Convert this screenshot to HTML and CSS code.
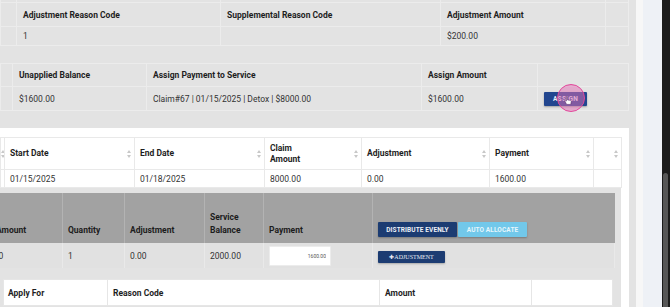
FILE: index.html
```html
<!DOCTYPE html>
<html lang="en">

  <head>
    <meta charset="UTF-8">
    <meta name="viewport" content="width=device-width, initial-scale=1.0">
    <title>Payment Posting</title>
    <link rel="stylesheet" href="styles.css">
  </head>

  <body>
    <div class="main">

      <table class="grid adj-table">
        <colgroup>
          <col class="w16"><col class="w204"><col class="w220"><col class="w165"><col>
        </colgroup>
        <tr class="cut-row"><td></td><td></td><td></td><td></td><td></td></tr>
        <tr class="head-row">
          <th></th>
          <th>Adjustment Reason Code</th>
          <th>Supplemental Reason Code</th>
          <th>Adjustment Amount</th>
          <th></th>
        </tr>
        <tr class="data-row">
          <td></td>
          <td>1</td>
          <td></td>
          <td>$200.00</td>
          <td></td>
        </tr>
      </table>

      <table class="grid assign-table">
        <colgroup>
          <col class="w12"><col class="w134"><col class="w275"><col class="w116"><col>
        </colgroup>
        <tr class="head-row">
          <th></th>
          <th>Unapplied Balance</th>
          <th>Assign Payment to Service</th>
          <th>Assign Amount</th>
          <th></th>
        </tr>
        <tr class="data-row">
          <td></td>
          <td>$1600.00</td>
          <td>Claim#67 | 01/15/2025 | Detox | $8000.00</td>
          <td>$1600.00</td>
          <td>
            <div class="assign-wrap">
              <button class="btn-assign">ASSIGN</button>
              <span class="click-ring">
                <svg class="hand" width="8" height="9" viewBox="0 0 8 9">
                  <path d="M2.4 0.6 L2.4 5 L1.4 4.2 Q0.6 3.8 0.7 4.7 L2.6 8.4 L6.8 8.4 L7.3 5.2 Q7.3 4.4 6.4 4.3 L3.5 3.9 L3.5 0.6 Q3 0 2.4 0.6 Z" fill="#fff" stroke="#5a2a6a" stroke-width="0.6"/>
                </svg>
              </span>
            </div>
          </td>
        </tr>
      </table>

      <div class="panel">
        <table class="grid claim-table">
          <colgroup>
            <col class="w4"><col class="w130"><col class="w130"><col class="w97"><col class="w128"><col class="w104"><col>
          </colgroup>
          <tr class="head-row">
            <th><div class="th-inner"><span></span><span class="sort"></span></div></th>
            <th><div class="th-inner"><span>Start Date</span><span class="sort"></span></div></th>
            <th><div class="th-inner"><span>End Date</span><span class="sort"></span></div></th>
            <th><div class="th-inner"><span>Claim<br>Amount</span><span class="sort"></span></div></th>
            <th><div class="th-inner"><span>Adjustment</span><span class="sort"></span></div></th>
            <th><div class="th-inner"><span>Payment</span><span class="sort"></span></div></th>
            <th><div class="th-inner"><span></span><span class="sort"></span></div></th>
          </tr>
          <tr class="data-row">
            <td></td>
            <td>01/15/2025</td>
            <td>01/18/2025</td>
            <td>8000.00</td>
            <td>0.00</td>
            <td>1600.00</td>
            <td></td>
          </tr>
        </table>

        <div class="nested">
          <table class="service-table">
            <colgroup>
              <col class="w68"><col class="w62"><col class="w80"><col class="w59"><col class="w109"><col>
            </colgroup>
            <tr class="head-row">
              <th class="first">Amount</th>
              <th>Quantity</th>
              <th>Adjustment</th>
              <th>Service<br>Balance</th>
              <th>Payment</th>
              <th>
                <div class="btn-group">
                  <button class="btn-dark">DISTRIBUTE EVENLY</button>
                  <button class="btn-light">AUTO ALLOCATE</button>
                </div>
              </th>
            </tr>
            <tr class="data-row">
              <td class="first">0</td>
              <td>1</td>
              <td>0.00</td>
              <td>2000.00</td>
              <td><input class="pay-input" type="text" value="1600.00"></td>
              <td><button class="btn-adjust">&#10010;ADJUSTMENT</button></td>
            </tr>
          </table>

          <table class="grid apply-table">
            <colgroup>
              <col class="w104"><col class="w272"><col class="w152"><col>
            </colgroup>
            <tr class="head-row">
              <th>Apply For</th>
              <th>Reason Code</th>
              <th>Amount</th>
              <th></th>
            </tr>
          </table>
        </div>
      </div>

    </div>
    <div class="edge"></div>
    <div class="side"></div>
    <div class="scrollbar"><div class="thumb"></div></div>
  </body>

</html>
```

FILE: styles.css
```css
body {
  margin: 0;
  height: 307px;
  overflow: hidden;
  display: flex;
  font-family: Roboto, "Liberation Sans", sans-serif;
  font-size: 8.5px;
  color: #333;
  background-color: #e3e3e3;
}

.main {
  width: 636px;
  flex-shrink: 0;
  background-color: #e3e3e3;
  overflow: hidden;
}

.edge {
  width: 7px;
  background-color: #f7f7f7;
}

.side {
  width: 19px;
  background-color: #eef1f6;
}

.scrollbar {
  width: 8px;
  background-color: #1c1c1c;
  padding-top: 173px;
  box-sizing: border-box;
}

.thumb {
  width: 5px;
  height: 140px;
  margin-left: 1px;
  border-radius: 3px;
  background-color: #575757;
}

/* column widths */

.w4 { width: 4px; }
.w12 { width: 12px; }
.w16 { width: 16px; }
.w59 { width: 59px; }
.w62 { width: 62px; }
.w68 { width: 68px; }
.w80 { width: 80px; }
.w97 { width: 97px; }
.w104 { width: 104px; }
.w109 { width: 109px; }
.w116 { width: 116px; }
.w128 { width: 128px; }
.w130 { width: 130px; }
.w134 { width: 134px; }
.w152 { width: 152px; }
.w165 { width: 165px; }
.w204 { width: 204px; }
.w220 { width: 220px; }
.w272 { width: 272px; }
.w275 { width: 275px; }

/* tables */

.grid {
  border-collapse: collapse;
  table-layout: fixed;
}

.grid th,
.grid td {
  border: 1px solid #ececec;
  text-align: left;
  padding: 0 6px;
  white-space: nowrap;
  overflow: hidden;
}

th {
  font-weight: 700;
  color: #1e1e1e;
}

.cut-row td {
  height: 2px;
  padding: 0;
  border-top: none;
}

.adj-table {
  width: 629px;
  margin-bottom: 17px;
}

.adj-table .head-row th {
  height: 23px;
}

.adj-table .data-row td {
  height: 18px;
}

.assign-table {
  width: 629px;
  margin-bottom: 17px;
}

.assign-table .head-row th {
  height: 22px;
}

.assign-table .data-row td {
  height: 23px;
  overflow: visible;
}

.assign-wrap {
  position: relative;
  display: flex;
}

.btn-assign {
  width: 43px;
  height: 14px;
  padding: 0;
  border: none;
  border-radius: 1px;
  background-color: #22468f;
  color: #e9e9f5;
  font-family: Roboto, "Liberation Sans", sans-serif;
  font-size: 6.5px;
  font-weight: 700;
  letter-spacing: 0.3px;
  box-shadow: 0 1px 2px rgba(0, 0, 0, 0.3);
}

.click-ring {
  position: absolute;
  left: 13px;
  top: -8px;
  width: 28px;
  height: 28px;
  border-radius: 50%;
  border: 1.5px solid #e2489b;
  background-color: rgba(226, 110, 180, 0.5);
  box-sizing: border-box;
}

.hand {
  position: absolute;
  left: 6px;
  top: 11px;
}

/* white panel */

.panel {
  width: 629px;
  background-color: #fff;
  padding-top: 9px;
}

.claim-table {
  width: 622px;
}

.claim-table th,
.claim-table td {
  border-color: #e9e9e9;
  padding: 0 5px;
}

.claim-table td:first-child {
  padding: 0;
}

.claim-table .head-row th {
  height: 31px;
  padding-right: 3px;
  line-height: 11px;
}

.claim-table .head-row th:first-child {
  padding: 0 2px 0 0;
}

.claim-table .data-row td {
  height: 17px;
}

.th-inner {
  display: flex;
  justify-content: space-between;
  align-items: center;
}

.sort {
  width: 4px;
  height: 8px;
  display: flex;
  flex-direction: column;
  justify-content: space-between;
  flex-shrink: 0;
}

.sort:before,
.sort:after {
  content: "";
  width: 0;
  border-left: 2px solid transparent;
  border-right: 2px solid transparent;
}

.sort:before {
  border-bottom: 3px solid #c8c8c8;
}

.sort:after {
  border-top: 3px solid #c8c8c8;
}

/* nested service rows */

.nested {
  width: 621px;
  background-color: #e3e3e3;
  padding: 5px 0 2px 0;
  overflow: hidden;
}

.service-table {
  border-collapse: collapse;
  table-layout: fixed;
  width: 621px;
  margin-left: -6px;
  margin-bottom: 11px;
}

.service-table th,
.service-table td {
  text-align: left;
  padding: 0 5px;
  white-space: nowrap;
}

.service-table .head-row th {
  height: 44px;
  background-color: #a2a2a2;
  border-left: 1px solid #b3b3b3;
  vertical-align: bottom;
  padding-bottom: 6px;
  line-height: 13px;
  color: #1c1c1c;
}

.service-table .first {
  border-left: none;
  padding-left: 1px;
}

.service-table td.first {
  padding-left: 4px;
}

.service-table .data-row td {
  height: 25px;
  background-color: #e1e1e1;
  border-left: 1px solid #e9e9e9;
  border-right: 1px solid #e9e9e9;
}

.service-table .data-row td.first {
  border-left: none;
}

.btn-group {
  display: flex;
  gap: 1px;
}

.btn-dark,
.btn-light {
  height: 15px;
  border: none;
  border-radius: 1px;
  padding: 0;
  font-family: Roboto, "Liberation Sans", sans-serif;
  font-size: 6.5px;
  font-weight: 700;
  letter-spacing: 0.1px;
  box-shadow: 0 1px 2px rgba(0, 0, 0, 0.25);
}

.btn-dark {
  width: 79px;
  background-color: #1c3c72;
  color: #eef1f7;
}

.btn-light {
  width: 69px;
  background-color: #72c8ea;
  color: #e6f6fc;
}

.pay-input {
  width: 62px;
  height: 20px;
  box-sizing: border-box;
  border: 1px solid #ececec;
  border-radius: 1px;
  background-color: #fff;
  text-align: right;
  font-family: Roboto, "Liberation Sans", sans-serif;
  font-size: 5px;
  color: #555;
  padding: 0 4px;
  margin-top: 1px;
  display: block;
}

.btn-adjust {
  width: 67px;
  height: 12px;
  padding: 0;
  margin-top: 2px;
  border: none;
  border-radius: 1px;
  background-color: #1c3c72;
  color: #e8ecf4;
  font-family: "Liberation Serif", serif;
  font-size: 6px;
  box-shadow: 0 1px 2px rgba(0, 0, 0, 0.25);
  display: block;
}

.apply-table {
  width: 610px;
  margin-left: 3px;
  background-color: #fff;
}

.apply-table th {
  border-color: #e6e6e6;
  height: 25px;
  padding: 0 5px;
}

.apply-table th:first-child {
  padding-left: 4px;
}
```
